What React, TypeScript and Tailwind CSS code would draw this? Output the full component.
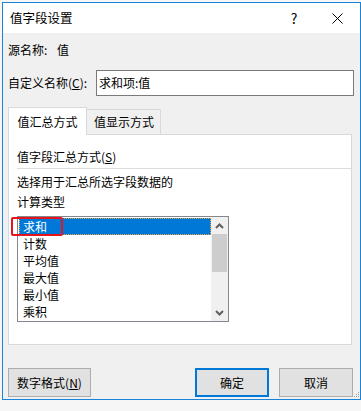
import React from "react";

const font = { fontFamily: '"Noto Sans CJK SC", "Noto Sans", sans-serif' };

function Chevron({ up }: { up?: boolean }) {
  return (
    <svg width="9" height="6" viewBox="0 0 9 6">
      <polyline
        points={up ? "1,5 4.5,1.5 8,5" : "1,1 4.5,4.5 8,1"}
        fill="none"
        stroke="#606060"
        strokeWidth="2"
      />
    </svg>
  );
}

export default function App() {
  const items = ["计数", "平均值", "最大值", "最小值", "乘积"];
  return (
    <div
      className="w-[361px] h-[411px] bg-[#f6f6f6] pt-[2px] pl-[2px] overflow-hidden text-[12px] text-black"
      style={font}
    >
      <div className="relative w-[359px] h-[398px] border border-[#1883d7] bg-[#f0f0f0] flex flex-col">
        {/* title bar */}
        <div className="h-[30px] shrink-0 bg-white flex items-center pl-[7px]">
          <span className="leading-[16px] text-[12.5px]">值字段设置</span>
          <span className="ml-auto w-[14px] text-center text-[14px] leading-[16px] mr-[31px]">?</span>
          <svg width="11" height="11" viewBox="0 0 11 11" className="mr-[17px]">
            <path d="M0.5 0.5 L10.5 10.5 M10.5 0.5 L0.5 10.5" stroke="#000" strokeWidth="1" />
          </svg>
        </div>

        {/* body */}
        <div className="flex flex-col pl-[5px]">
          <div className="mt-[9px] flex leading-[16px] h-[16px]">
            <span className="w-[49px]">源名称:</span>
            <span>值</span>
          </div>

          <div className="mt-[12px] flex items-center pr-[6px]">
            <span className="w-[88px] leading-[16px]">
              自定义名称(<span className="underline">C</span>):
            </span>
            <div className="flex-1 h-[26px] border border-[#7a7a7a] bg-white flex items-center pl-[2px] leading-[16px]">
              求和项:值
            </div>
          </div>

          {/* tabs */}
          <div className="mt-[11px] h-[27px] flex items-end">
            <div className="relative z-10 w-[79px] h-[28px] mb-[-1px] bg-white border border-[#d9d9d9] border-b-0 flex items-center justify-center leading-[16px]">
              值汇总方式
            </div>
            <div className="w-[74px] h-[25px] bg-[#f0f0f0] border border-[#d9d9d9] border-b-0 border-l-0 flex items-center pl-[7px] leading-[16px]">
              值显示方式
            </div>
          </div>

          {/* panel */}
          <div className="w-[344px] h-[211px] bg-white border border-[#d9d9d9] flex flex-col pl-[8px]">
            <div className="mt-[14px] leading-[16px] h-[16px]">
              值字段汇总方式(<span className="underline">S</span>)
            </div>
            <div className="mt-[3px] h-px bg-[#dcdcdc]" />
            <div className="mt-[5px] leading-[16px] h-[16px]">选择用于汇总所选字段数据的</div>
            <div className="mt-[4px] leading-[16px] h-[16px]">计算类型</div>

            {/* listbox */}
            <div className="relative mt-[6px] w-[212px] h-[106px] border border-[#828790] bg-white flex">
              <div className="w-[193px] flex flex-col pl-px pt-px">
                <div className="h-[17px] bg-[#0078d7] text-white leading-[15px] pl-[3px] border border-dotted border-[#f5a341]">
                  求和
                </div>
                {items.map((t) => (
                  <div key={t} className="h-[17px] leading-[17px] pl-[4px]">
                    {t}
                  </div>
                ))}
              </div>
              <div className="w-[17px] h-full bg-[#f0f0f0] flex flex-col">
                <div className="h-[17px] flex items-center justify-center">
                  <Chevron up />
                </div>
                <div className="mx-px h-[38px] bg-[#cdcdcd]" />
                <div className="mt-auto h-[17px] flex items-center justify-center">
                  <Chevron />
                </div>
              </div>
              <div className="absolute left-[-7px] top-0 w-[52px] h-[19px] border-2 border-[#e8141b] rounded-[2px]" />
            </div>
          </div>

          {/* buttons */}
          <div className="mt-[23px] flex pr-[7px]">
            <div className="w-[83px] h-[29px] bg-[#e1e1e1] border border-[#adadad] flex items-center justify-center leading-[16px]">
              数字格式(<span className="underline">N</span>)
            </div>
            <div className="ml-auto w-[74px] h-[29px] bg-[#e1e1e1] border-2 border-[#0078d7] flex items-center justify-center leading-[16px]">
              确定
            </div>
            <div className="ml-[10px] w-[74px] h-[29px] bg-[#e1e1e1] border border-[#adadad] flex items-center justify-center leading-[16px]">
              取消
            </div>
          </div>
        </div>

        {/* resize grip */}
        <svg width="8" height="8" viewBox="0 0 8 8" className="absolute right-0 bottom-0">
          <rect x="6" y="1" width="1" height="1" fill="#a0a0a0" />
          <rect x="4" y="3" width="1" height="1" fill="#a0a0a0" />
          <rect x="6" y="3" width="1" height="1" fill="#a0a0a0" />
          <rect x="2" y="5" width="1" height="1" fill="#a0a0a0" />
          <rect x="4" y="5" width="1" height="1" fill="#a0a0a0" />
          <rect x="6" y="5" width="1" height="1" fill="#a0a0a0" />
        </svg>
      </div>
    </div>
  );
}
